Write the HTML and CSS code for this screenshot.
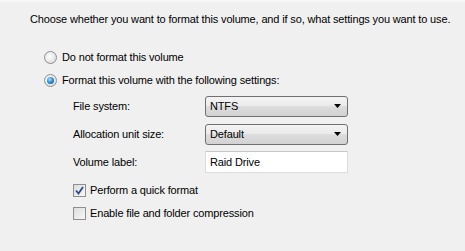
FILE: index.html
```html
<!DOCTYPE html>
<html>
<head>
<meta charset="utf-8">
<link rel="stylesheet" href="styles.css">
</head>
<body>
<div class="page">
  <p class="intro">Choose whether you want to format this volume, and if so, what settings you want to use.</p>
  <div class="options">
    <label class="radio-row">
      <span class="radio"></span>
      <span>Do not format this volume</span>
    </label>
    <label class="radio-row">
      <span class="radio checked"><span class="dot"></span></span>
      <span>Format this volume with the following settings:</span>
    </label>
  </div>
  <div class="settings">
    <div class="field">
      <span class="field-label">File system:</span>
      <div class="combo"><span>NTFS</span><svg class="arrow" width="7" height="4" viewBox="0 0 7 4"><path d="M0 0H7L3.5 4Z" fill="#000"/></svg></div>
    </div>
    <div class="field">
      <span class="field-label">Allocation unit size:</span>
      <div class="combo"><span>Default</span><svg class="arrow" width="7" height="4" viewBox="0 0 7 4"><path d="M0 0H7L3.5 4Z" fill="#000"/></svg></div>
    </div>
    <div class="field">
      <span class="field-label">Volume label:</span>
      <div class="textbox">Raid Drive</div>
    </div>
    <div class="checks">
      <label class="check-row">
        <span class="check checked"><svg width="9" height="9" viewBox="0 0 9 9"><path d="M1 4.5L3.5 7.5L8 1" fill="none" stroke="#2c4a8c" stroke-width="1.8"/></svg></span>
        <span>Perform a quick format</span>
      </label>
      <label class="check-row">
        <span class="check"></span>
        <span>Enable file and folder compression</span>
      </label>
    </div>
  </div>
</div>
</body>
</html>
```
FILE: styles.css
```css
html, body {
  margin: 0;
  padding: 0;
  background: #f0f0f0;
}
body {
  font-family: "Liberation Sans", Arial, sans-serif;
  font-size: 11px;
  letter-spacing: -0.15px;
  color: #000;
  width: 465px;
  height: 251px;
  overflow: hidden;
  border-top: 2px solid #f7f7f7;
  box-sizing: border-box;
}
.page {
  padding: 10px 0 0 30px;
}
.intro {
  margin: 0;
  line-height: 14px;
}
.options {
  margin-top: 24px;
  padding-left: 14px;
  display: flex;
  flex-direction: column;
  gap: 9px;
}
.radio-row, .check-row {
  display: flex;
  align-items: center;
  gap: 5px;
  height: 14px;
}
.radio {
  width: 11px;
  height: 11px;
  border-radius: 50%;
  border: 1px solid #8e8f8f;
  background: radial-gradient(circle at 40% 40%, #ffffff 0%, #e6e6e6 60%, #d0d0d0 100%);
  display: flex;
  align-items: center;
  justify-content: center;
  flex: none;
}
.radio .dot {
  width: 7px;
  height: 7px;
  border-radius: 50%;
  background: radial-gradient(circle at 40% 35%, #a9e2fb 0%, #2a8ad4 50%, #0d4f8b 100%);
}
.settings {
  padding-left: 43px;
  margin-top: 8px;
  display: flex;
  flex-direction: column;
}
.field {
  display: flex;
  align-items: center;
  height: 22px;
  margin-bottom: 6px;
}
.field-label {
  width: 132px;
}
.combo {
  border: 1px solid #707070;
  border-radius: 3px;
  background: linear-gradient(#f3f3f3 0%, #ebebeb 45%, #dddddd 50%, #d2d2d2 100%);
  display: flex;
  align-items: center;
  justify-content: space-between;
  padding: 0 6px 0 4px;
  box-sizing: border-box;
  width: 143px;
  height: 21px;
}
.arrow {
  display: block;
}
.textbox {
  width: 143px;
  height: 22px;
  box-sizing: border-box;
  border: 1px solid #dcdcdc;
  border-top-color: #c8c8c8;
  background: #fff;
  padding: 4px 0 0 4px;
}
.checks {
  display: flex;
  flex-direction: column;
  gap: 9px;
  margin-top: 4px;
}
.check {
  width: 11px;
  height: 11px;
  border: 1px solid #8e8f8f;
  background: linear-gradient(135deg, #dcdcdc, #f8f8f8);
  display: flex;
  align-items: center;
  justify-content: center;
  flex: none;
}
.check-row {
  gap: 4px;
}
```
